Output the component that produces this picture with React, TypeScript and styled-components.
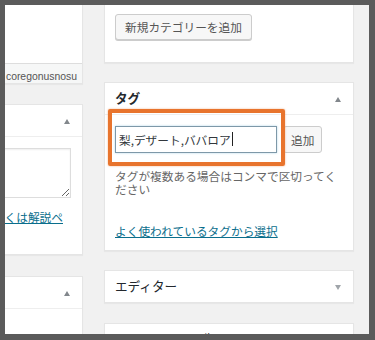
import styled, { createGlobalStyle } from "styled-components";

const GlobalStyle = createGlobalStyle`
  html, body {
    margin: 0;
    padding: 0;
    background: #5b5b5b;
  }
  body {
    font-family: "Noto Sans CJK JP", "Noto Sans", sans-serif;
  }
`;

// the grey admin screen inside the dark frame
const Screen = styled.div`
  width: 364px;
  height: 329px;
  margin: 5px 0 0 5px;
  overflow: hidden;
  background: #f1f1f1;
  display: flex;
  align-items: flex-start;
  gap: 21px;
`;

const LeftColumn = styled.div`
  width: 78px;
  flex-shrink: 0;
  display: flex;
  flex-direction: column;
`;

const RightColumn = styled.div`
  width: 250px;
  flex-shrink: 0;
  display: flex;
  flex-direction: column;
`;

type PanelProps = { $gap?: number; $cut?: boolean; $left?: boolean };

const Panel = styled.div<PanelProps>`
  position: relative;
  background: #fff;
  border: 1px solid #e5e5e5;
  box-shadow: 0 1px 1px rgba(0, 0, 0, 0.04);
  box-sizing: border-box;
  margin-top: ${(p) => (p.$cut ? "-10px" : `${p.$gap ?? 20}px`)};
  margin-left: ${(p) => (p.$left ? "-20px" : "0")};
  width: ${(p) => (p.$left ? "calc(100% + 20px)" : "100%")};
`;

const PanelHeader = styled.div<{ $open?: boolean }>`
  height: 31px;
  display: flex;
  align-items: center;
  justify-content: space-between;
  padding: 0 12px 0 10px;
  border-bottom: ${(p) => (p.$open ? "1px solid #eee" : "none")};
`;

const PanelTitle = styled.h2<{ $bold?: boolean }>`
  margin: 0;
  font-size: 12.6px;
  font-weight: ${(p) => (p.$bold ? 700 : 400)};
  color: #23282d;
  line-height: 1;
`;

const Toggle = styled.span<{ $down?: boolean }>`
  width: 0;
  height: 0;
  margin-top: 2px;
  border-left: 3.5px solid transparent;
  border-right: 3.5px solid transparent;
  ${(p) =>
    p.$down
      ? "border-top: 5px solid #a0a5aa;"
      : "border-bottom: 5px solid #82878c;"}
`;

const PanelBody = styled.div<{ $pt?: number; $pb?: number }>`
  padding: ${(p) => p.$pt ?? 11}px 12px ${(p) => p.$pb ?? 12}px 10px;
`;

const LeftBody = styled.div<{ $h?: number }>`
  padding: 11px 11px 30px 10px;
  ${(p) => (p.$h ? `height: ${p.$h}px; box-sizing: border-box;` : "")}
`;

const Footer = styled.div`
  height: 20px;
  padding: 6px 5px 0 0;
  box-sizing: border-box;
  border-top: 1px solid #ddd;
  background: #f6f7f7;
  display: flex;
  justify-content: flex-end;
`;

const FooterText = styled.span`
  font-family: "Liberation Sans", Arial, sans-serif;
  font-size: 10.4px;
  line-height: 14px;
  color: #555;
  white-space: nowrap;
`;

const TextArea = styled.textarea`
  display: block;
  width: 100%;
  height: 50px;
  box-sizing: border-box;
  border: 1px solid #ddd;
  box-shadow: inset 0 1px 2px rgba(0, 0, 0, 0.07);
  resize: both;
  margin: 0;
`;

const LinkRow = styled.div`
  display: flex;
  justify-content: flex-end;
  padding-right: 8px;
  margin-top: 12px;
`;

const Link = styled.a`
  font-size: 11.7px;
  line-height: 14px;
  color: #0a6e8c;
  text-decoration: underline;
  white-space: nowrap;
`;

const Button = styled.button`
  height: 26px;
  padding: 0 9px;
  font-family: "Noto Sans CJK JP", sans-serif;
  font-size: 11.7px;
  color: #555;
  background: #f7f7f7;
  border: 1px solid #ccc;
  border-radius: 3px;
  box-shadow: 0 1px 0 #ccc;
  white-space: nowrap;
  line-height: 1;
`;

const InputRow = styled.div`
  display: flex;
  gap: 6px;
  height: 27px;
`;

const TagInput = styled.div`
  width: 162px;
  height: 27px;
  box-sizing: border-box;
  border: 1px solid #7e98a8;
  box-shadow: 0 0 2px rgba(30, 140, 190, 0.35);
  padding-left: 3px;
  display: flex;
  align-items: center;
  font-size: 11.7px;
  color: #32373c;
  white-space: nowrap;
`;

const Caret = styled.span`
  display: inline-block;
  width: 1px;
  height: 14px;
  background: #222;
  margin-left: 1px;
`;

const AddButton = styled(Button)`
  height: 27px;
  padding: 0 7px;
  box-shadow: none;
`;

const HowTo = styled.p`
  margin: 16px 0 0;
  font-size: 11.7px;
  line-height: 13px;
  color: #666;
`;

const TagLinkRow = styled.div`
  margin-top: 27px;
  line-height: 14px;
`;

// the orange highlight drawn over the tag input
const Highlight = styled.div`
  position: absolute;
  left: 3px;
  top: 26px;
  width: 177px;
  height: 57px;
  box-sizing: border-box;
  border: 4.5px solid #e8742d;
  border-radius: 2px;
  box-shadow: 0 0 2px rgba(232, 116, 45, 0.6);
  pointer-events: none;
`;

export default function App() {
  return (
    <>
      <GlobalStyle />
      <Screen>
        <LeftColumn>
          <Panel $cut $left>
            <LeftBody $h={67} />
            <Footer>
              <FooterText>coregonusnosu</FooterText>
            </Footer>
          </Panel>
          <Panel $left $gap={20}>
            <PanelHeader $open>
              <span />
              <Toggle />
            </PanelHeader>
            <LeftBody>
              <TextArea readOnly />
              <LinkRow>
                <Link>くは解説ペ</Link>
              </LinkRow>
            </LeftBody>
          </Panel>
          <Panel $left $gap={21}>
            <PanelHeader $open>
              <span />
              <Toggle />
            </PanelHeader>
            <LeftBody $h={100} />
          </Panel>
        </LeftColumn>

        <RightColumn>
          <Panel $cut>
            <PanelBody $pt={17} $pb={22}>
              <Button>新規カテゴリーを追加</Button>
            </PanelBody>
          </Panel>

          <Panel $gap={19}>
            <PanelHeader $open>
              <PanelTitle $bold>タグ</PanelTitle>
              <Toggle />
            </PanelHeader>
            <PanelBody>
              <InputRow>
                <TagInput>
                  梨,デザート,ババロア
                  <Caret />
                </TagInput>
                <AddButton>追加</AddButton>
              </InputRow>
              <HowTo>タグが複数ある場合はコンマで区切ってください</HowTo>
              <TagLinkRow>
                <Link>よく使われているタグから選択</Link>
              </TagLinkRow>
            </PanelBody>
            <Highlight />
          </Panel>

          <Panel $gap={19}>
            <PanelHeader>
              <PanelTitle>エディター</PanelTitle>
              <Toggle $down />
            </PanelHeader>
          </Panel>

          <Panel $gap={20}>
            <PanelHeader>
              <PanelTitle>アイキャッチ画像</PanelTitle>
            </PanelHeader>
          </Panel>
        </RightColumn>
      </Screen>
    </>
  );
}
